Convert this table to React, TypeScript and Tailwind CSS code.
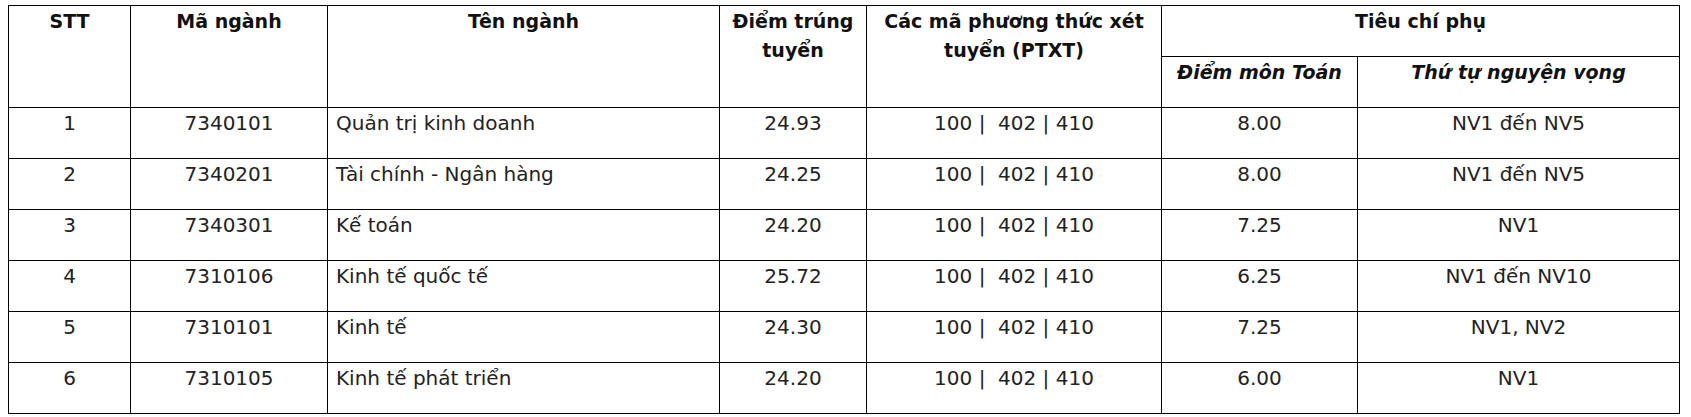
import React from "react";

const rows = [
  ["1", "7340101", "Quản trị kinh doanh", "24.93", "8.00", "NV1 đến NV5"],
  ["2", "7340201", "Tài chính - Ngân hàng", "24.25", "8.00", "NV1 đến NV5"],
  ["3", "7340301", "Kế toán", "24.20", "7.25", "NV1"],
  ["4", "7310106", "Kinh tế quốc tế", "25.72", "6.25", "NV1 đến NV10"],
  ["5", "7310101", "Kinh tế", "24.30", "7.25", "NV1, NV2"],
  ["6", "7310105", "Kinh tế phát triển", "24.20", "6.00", "NV1"],
];

const th =
  "border border-black align-top text-center font-bold text-[19px] leading-[29px] pt-[1px] px-[6px] h-[51px] text-[#111]";
const td =
  "border border-black align-top text-center text-[20px] leading-[29px] pt-[1px] px-[8px] h-[51px] text-[#222]";

export default function App() {
  return (
    <div
      className="w-[1691px] h-[417px] bg-white pt-[5px] pl-[8px]"
      style={{ fontFamily: '"DejaVu Sans", sans-serif' }}
    >
      <table className="border-collapse table-fixed w-[1671px]">
        <colgroup>
          <col className="w-[122px]" />
          <col className="w-[197px]" />
          <col className="w-[392px]" />
          <col className="w-[147px]" />
          <col className="w-[295px]" />
          <col className="w-[196px]" />
          <col className="w-[322px]" />
        </colgroup>
        <thead>
          <tr>
            <th rowSpan={2} className={th}>STT</th>
            <th rowSpan={2} className={th}>Mã ngành</th>
            <th rowSpan={2} className={th}>Tên ngành</th>
            <th rowSpan={2} className={th}>
              Điểm trúng
              <br />
              tuyển
            </th>
            <th rowSpan={2} className={th}>
              Các mã phương thức xét
              <br />
              tuyển (PTXT)
            </th>
            <th colSpan={2} className={th}>Tiêu chí phụ</th>
          </tr>
          <tr>
            <th className={th + " italic"}>Điểm môn Toán</th>
            <th className={th + " italic"}>Thứ tự nguyện vọng</th>
          </tr>
        </thead>
        <tbody>
          {rows.map((r) => (
            <tr key={r[0]}>
              <td className={td}>{r[0]}</td>
              <td className={td}>{r[1]}</td>
              <td className={td + " text-left"}>{r[2]}</td>
              <td className={td}>{r[3]}</td>
              <td className={td}>{"100 |\u00a0 402 | 410"}</td>
              <td className={td}>{r[4]}</td>
              <td className={td}>{r[5]}</td>
            </tr>
          ))}
        </tbody>
      </table>
    </div>
  );
}
